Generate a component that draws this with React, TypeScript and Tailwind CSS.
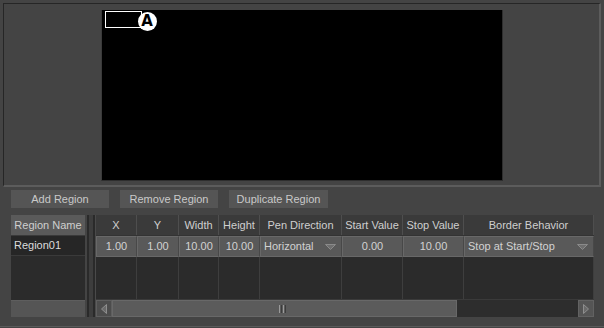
import React from "react";

const cols = [
  { label: "X", w: 41, v: "1.00" },
  { label: "Y", w: 42, v: "1.00" },
  { label: "Width", w: 40, v: "10.00" },
  { label: "Height", w: 41, v: "10.00" },
  { label: "Pen Direction", w: 82, v: "Horizontal", dd: true },
  { label: "Start Value", w: 61, v: "0.00" },
  { label: "Stop Value", w: 61, v: "10.00" },
  { label: "Border Behavior", w: 130, v: "Stop at Start/Stop", dd: true },
];

function DownTri() {
  return (
    <svg width="11" height="6" viewBox="0 0 11 6" className="shrink-0">
      <path d="M0.5 0.5 L10.5 0.5 L5.5 5.5 Z" fill="#6e6e6e" stroke="#8a8a8a" strokeWidth="1" />
    </svg>
  );
}

export default function App() {
  return (
    <div
      className="w-[604px] h-[328px] bg-[#444444] overflow-hidden text-[11px] text-[#c8c8c8] flex flex-col"
      style={{ fontFamily: '"Liberation Sans", Arial, sans-serif' }}
    >
      {/* top viewer frame */}
      <div className="mx-[3px] mt-[3px] h-[184px] border-t border-l border-t-[#262626] border-l-[#262626] border-r-2 border-b-2 border-r-[#5c5c5c] border-b-[#5c5c5c] flex justify-center pt-[6px] shrink-0">
        <div className="relative w-[402px] h-[171px] bg-black border-r border-b border-[#2e2e2e] border-l border-l-[#3a3a3a]">
          <div className="absolute left-[3px] top-[1px] w-[37px] h-[17px] border border-white" />
          <div className="absolute left-[36px] top-[2px] w-[19px] h-[19px] rounded-full bg-white flex items-center justify-center">
            <span className="text-black font-bold text-[15px] leading-none" style={{ fontFamily: '"DejaVu Sans", sans-serif' }}>
              A
            </span>
          </div>
        </div>
      </div>

      {/* bottom section */}
      <div className="flex-1 flex flex-col border-b border-b-[#5a5a5a] mb-[1px]">
        {/* buttons */}
        <div className="flex mt-[3px] ml-[11px] gap-[11px]">
          <div className="w-[98px] h-[18px] bg-[#555555] flex items-center justify-center text-[#c9c9c9]">Add Region</div>
          <div className="w-[98px] h-[18px] bg-[#555555] flex items-center justify-center text-[#c9c9c9]">Remove Region</div>
          <div className="w-[99px] h-[18px] bg-[#555555] flex items-center justify-center text-[#c9c9c9]">Duplicate Region</div>
        </div>

        {/* tables */}
        <div className="flex mt-[7px] ml-[11px] h-[102px]">
          {/* region name list */}
          <div className="w-[74px] flex flex-col bg-[#2b2b2b]">
            <div className="h-[21px] bg-[#5a5a5a] flex items-center justify-center text-[#cfcfcf] border-b border-[#3a3a3a]">
              Region Name
            </div>
            <div className="h-[20px] bg-[#262626] flex items-center pl-[3px] text-[#dcdcdc] border-b border-[#3a3a3a]">
              Region01
            </div>
            <div className="flex-1" />
            <div className="h-[17px] bg-[#555555] border-t border-[#5e5e5e]" />
          </div>

          {/* splitter */}
          <div className="w-[10px] flex">
            <div className="w-[2px]" />
            <div className="w-[2px] bg-[#2a2a2a]" />
            <div className="w-[4px] bg-[#3d3d3d]" />
            <div className="w-[2px] bg-[#2a2a2a]" />
          </div>

          {/* main table */}
          <div className="w-[499px] flex flex-col bg-[#2b2b2b] border-l border-[#4a4a4a]">
            <div className="flex h-[21px] bg-[#3a3a3a] border-b border-[#333]">
              {cols.map((c) => (
                <div
                  key={c.label}
                  style={{ width: c.w }}
                  className="h-full flex items-center justify-center border-r border-[#4e4e4e] text-[#cfcfcf] whitespace-nowrap shrink-0"
                >
                  {c.label}
                </div>
              ))}
            </div>
            <div className="flex h-[21px]">
              {cols.map((c) => (
                <div
                  key={c.label}
                  style={{ width: c.w }}
                  className={
                    "h-full shrink-0 bg-[#595959] border border-[#686868] border-r-[#484848] flex items-center whitespace-nowrap text-[#d2d2d2] " +
                    (c.dd ? "justify-between pl-[3px] pr-[5px]" : "justify-center")
                  }
                >
                  <span>{c.v}</span>
                  {c.dd && <DownTri />}
                </div>
              ))}
            </div>
            <div className="flex flex-1">
              {cols.map((c) => (
                <div key={c.label} style={{ width: c.w }} className="h-full shrink-0 border-r border-[#3e3e3e]" />
              ))}
            </div>
            {/* scrollbar */}
            <div className="flex h-[18px] border-t border-[#3a3a3a]">
              <div className="w-[16px] h-full bg-[#4c4c4c] border border-[#5e5e5e] flex items-center justify-center">
                <svg width="6" height="10" viewBox="0 0 6 10">
                  <path d="M5.5 0.5 L0.5 5 L5.5 9.5 Z" fill="#6a6a6a" stroke="#8e8e8e" strokeWidth="1" />
                </svg>
              </div>
              <div className="w-[345px] h-full bg-[#5b5b5b] border border-[#686868] flex items-center justify-end pr-[170px]">
                <div className="flex gap-[1px] h-[8px]">
                  <div className="w-[1px] bg-[#9a9a9a]" />
                  <div className="w-[1px] bg-[#3c3c3c]" />
                  <div className="w-[1px] bg-[#9a9a9a]" />
                  <div className="w-[1px] bg-[#3c3c3c]" />
                </div>
              </div>
              <div className="flex-1 h-full bg-[#2d2d2d]" />
              <div className="w-[16px] h-full bg-[#555555] border border-[#626262] flex items-center justify-center">
                <svg width="6" height="10" viewBox="0 0 6 10">
                  <path d="M0.5 0.5 L5.5 5 L0.5 9.5 Z" fill="#6a6a6a" stroke="#8e8e8e" strokeWidth="1" />
                </svg>
              </div>
            </div>
          </div>
        </div>
      </div>
    </div>
  );
}
